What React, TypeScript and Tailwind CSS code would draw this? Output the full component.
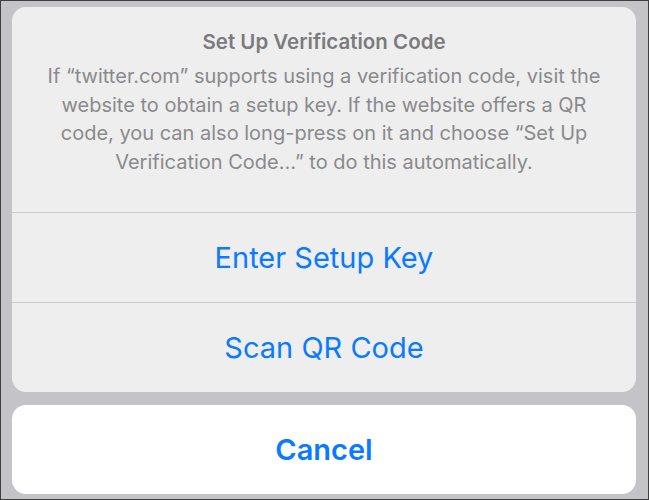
const actions = ["Enter Setup Key", "Scan QR Code"];

const App = () => {
  return (
    <div
      className="w-[649px] h-[500px] border border-[#3f3f3f] bg-[#c4c4c8] pl-[11px] pt-[6px]"
      style={{ fontFamily: "Inter, 'Noto Sans', sans-serif" }}
    >
      <div className="flex flex-col w-[624px] h-[385px] bg-[#eeeeef] rounded-[14px] overflow-hidden">
        <div className="flex flex-col items-center h-[205px] pt-[22px] text-center">
          <h1 className="text-[20.5px] leading-[26px] font-semibold text-[#7b7b7d]">
            Set Up Verification Code
          </h1>
          <p className="mt-[7px] px-[20px] text-[20px] leading-[28.5px] text-[#8a8a8c]">
            If “twitter.com” supports using a verification code, visit the
            <br />
            website to obtain a setup key. If the website offers a QR
            <br />
            code, you can also long-press on it and choose “Set Up
            <br />
            Verification Code…” to do this automatically.
          </p>
        </div>
        {actions.map((label) => (
          <div key={label} className="flex flex-col">
            <div className="h-px bg-[#c9c9cc]" />
            <button className="h-[89px] flex items-center justify-center text-[29px] text-[#0a7aff]">
              {label}
            </button>
          </div>
        ))}
      </div>
      <button className="mt-[13px] w-[624px] h-[89px] bg-white rounded-[14px] flex items-center justify-center text-[29px] font-semibold text-[#0a7aff]">
        Cancel
      </button>
    </div>
  );
};

export default App;
